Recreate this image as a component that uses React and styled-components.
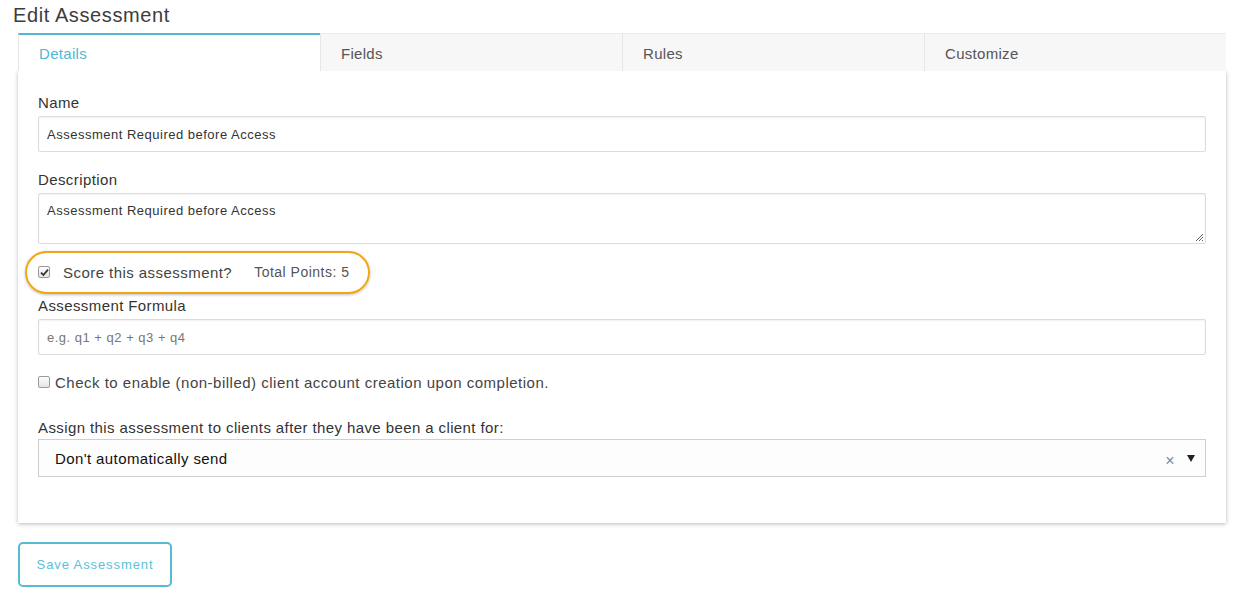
import styled, { createGlobalStyle } from "styled-components";

const GlobalStyle = createGlobalStyle`
  body {
    margin: 0;
    background: #fff;
    font-family: "Liberation Sans", Arial, sans-serif;
    color: #333;
  }
`;

const Page = styled.div`
  padding: 2px 9px 0 13px;
  width: 1235px;
  box-sizing: border-box;
`;

const Title = styled.h1`
  margin: 0;
  font-size: 20px;
  font-weight: 400;
  line-height: 26px;
  letter-spacing: 0.6px;
  color: #3d3d3d;
`;

const Content = styled.div`
  margin: 5px 0 0 5px;
  width: 1208px;
`;

const Tabs = styled.div`
  display: grid;
  grid-template-columns: repeat(4, 1fr);
  height: 38px;
`;

const Tab = styled.div`
  display: flex;
  align-items: center;
  padding: 0 20px;
  font-size: 15px;
  letter-spacing: 0.3px;
  box-sizing: border-box;
  color: ${({ $active }) => ($active ? "#4fb8d3" : "#555")};
  background: ${({ $active }) => ($active ? "#fff" : "#f7f7f7")};
  border-top: ${({ $active }) => ($active ? "2px solid #4fb8d3" : "1px solid #ececec")};
  border-left: 1px solid #e6e6e6;
  padding-top: ${({ $active }) => ($active ? "0" : "1px")};
`;

const Panel = styled.div`
  background: #fff;
  padding: 22px 20px 46px 20px;
  box-shadow: 0 1px 4px rgba(40, 60, 80, 0.35);
`;

const Label = styled.div`
  font-size: 15px;
  line-height: 20px;
  letter-spacing: 0.4px;
  color: #333;
  margin: ${({ $top }) => $top || "0"} 0 ${({ $bottom }) => $bottom || "3px"} 0;
`;

const TextInput = styled.div`
  height: 36px;
  box-sizing: border-box;
  border: 1px solid #dcdcdc;
  border-radius: 2px;
  box-shadow: inset 0 1px 2px rgba(0, 0, 0, 0.06);
  padding: 0 8px;
  display: flex;
  align-items: center;
  font-size: 13px;
  letter-spacing: 0.5px;
  color: ${({ $placeholder }) => ($placeholder ? "#777" : "#333")};
`;

const TextArea = styled.div`
  position: relative;
  height: 51px;
  box-sizing: border-box;
  border: 1px solid #dcdcdc;
  border-radius: 2px;
  box-shadow: inset 0 1px 2px rgba(0, 0, 0, 0.06);
  padding: 9px 8px;
  font-size: 13px;
  line-height: 16px;
  letter-spacing: 0.5px;
  color: #333;
`;

const Grip = styled.svg`
  position: absolute;
  right: 1px;
  bottom: 1px;
`;

const ScoreRow = styled.div`
  position: relative;
  display: flex;
  align-items: center;
  height: 24px;
  margin-top: 16px;
  font-size: 15px;
  letter-spacing: 0.45px;
  color: #444;
`;

const Highlight = styled.div`
  position: absolute;
  left: -13px;
  top: -9px;
  width: 345px;
  height: 43px;
  box-sizing: border-box;
  border: 2.5px solid #f2a516;
  border-radius: 22px;
  box-shadow: 0 1px 3px rgba(0, 0, 0, 0.25);
  pointer-events: none;
`;

const Box = styled.span`
  width: 12px;
  height: 12px;
  box-sizing: border-box;
  border: 1px solid #9a9a9a;
  border-radius: 2px;
  background: linear-gradient(#fdfdfd, #e4e4e4);
  display: inline-flex;
  align-items: center;
  justify-content: center;
  flex-shrink: 0;
  margin-right: ${({ $gap }) => $gap};
`;

const Points = styled.span`
  margin-left: 22px;
  font-size: 14px;
  letter-spacing: 0.5px;
  color: #555;
`;

const CheckRow = styled.div`
  display: flex;
  align-items: center;
  margin-top: 17px;
  font-size: 15px;
  letter-spacing: 0.5px;
  color: #444;
  height: 20px;
`;

const Select = styled.div`
  height: 38px;
  box-sizing: border-box;
  border: 1px solid #cfcfcf;
  background: #fdfdfd;
  display: flex;
  align-items: center;
  padding: 0 10px 0 16px;
  font-size: 15px;
  letter-spacing: 0.4px;
  color: #111;
`;

const SelectValue = styled.span`
  flex: 1;
`;

const Clear = styled.span`
  color: #838a94;
  font-size: 16px;
  margin-right: 12px;
  margin-top: 6px;
`;

const Caret = styled.span`
  width: 0;
  height: 0;
  border-left: 4px solid transparent;
  border-right: 4px solid transparent;
  border-top: 7px solid #222;
  margin-top: 1px;
`;

const SaveButton = styled.button`
  margin-top: 19px;
  width: 154px;
  height: 45px;
  border: 2px solid #55bbd3;
  border-radius: 5px;
  background: #fff;
  color: #5bbfd8;
  font-family: "Liberation Sans", Arial, sans-serif;
  font-size: 13px;
  letter-spacing: 0.9px;
  cursor: pointer;
`;

const Checkbox = ({ checked, gap }) => (
  <Box $gap={gap}>
    {checked && (
      <svg width="9" height="9" viewBox="0 0 9 9">
        <path d="M1 4.6 L3.4 7 L8 1.6" fill="none" stroke="#333" strokeWidth="1.8" />
      </svg>
    )}
  </Box>
);

const tabs = ["Details", "Fields", "Rules", "Customize"];

const App = () => {
  return (
    <Page>
      <GlobalStyle />
      <Title>Edit Assessment</Title>
      <Content>
        <Tabs>
          {tabs.map((t, i) => (
            <Tab key={t} $active={i === 0}>
              {t}
            </Tab>
          ))}
        </Tabs>
        <Panel>
          <Label>Name</Label>
          <TextInput>Assessment Required before Access</TextInput>

          <Label $top="18px">Description</Label>
          <TextArea>
            Assessment Required before Access
            <Grip width="10" height="10" viewBox="0 0 10 10">
              <path d="M9 2 L2 9 M9 5 L5 9 M9 8 L8 9" stroke="#666" strokeWidth="1" />
            </Grip>
          </TextArea>

          <ScoreRow>
            <Highlight />
            <Checkbox checked gap="13px" />
            Score this assessment?
            <Points>Total Points: 5</Points>
          </ScoreRow>

          <Label $top="12px">Assessment Formula</Label>
          <TextInput $placeholder>e.g. q1 + q2 + q3 + q4</TextInput>

          <CheckRow>
            <Checkbox gap="5px" />
            Check to enable (non-billed) client account creation upon completion.
          </CheckRow>

          <Label $top="26px" $bottom="1px">
            Assign this assessment to clients after they have been a client for:
          </Label>
          <Select>
            <SelectValue>Don't automatically send</SelectValue>
            <Clear>×</Clear>
            <Caret />
          </Select>
        </Panel>
        <SaveButton>Save Assessment</SaveButton>
      </Content>
    </Page>
  );
};

export default App;
